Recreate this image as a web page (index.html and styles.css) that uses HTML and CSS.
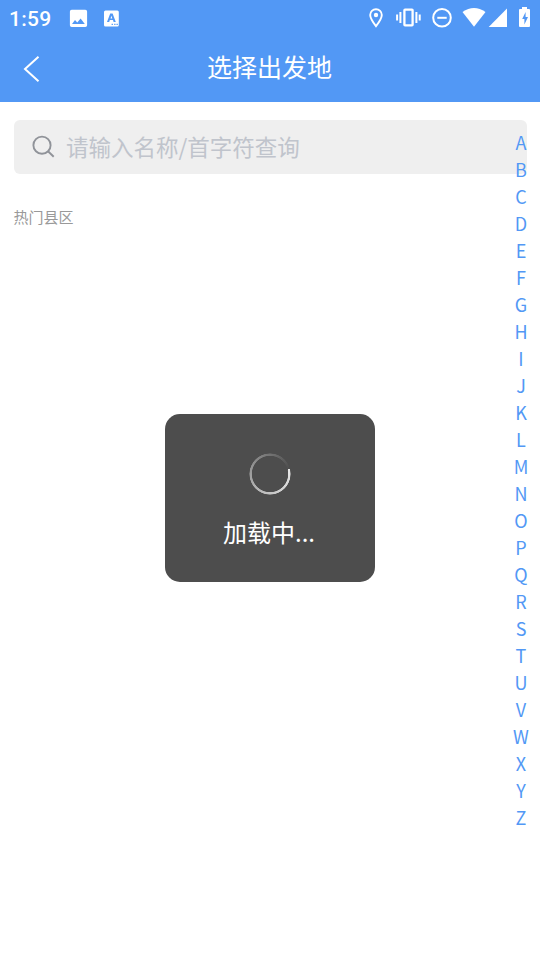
FILE: index.html
```html
<!DOCTYPE html>
<html lang="zh-CN">
<head>
<meta charset="utf-8">
<title>选择出发地</title>
<link rel="stylesheet" href="styles.css">
</head>
<body>
<header class="header">
  <div class="status">
    <span class="time">1:59</span>
    <svg class="notifications" width="60" height="36" viewBox="0 0 60 36">
      <path fill="#fff" fill-rule="evenodd" d="M3.700 9.700h13.600q1.800 0 1.800 1.800v13.700q0 1.800-1.800 1.800H3.700q-1.800 0-1.800-1.800V11.500q0-1.800 1.800-1.800zM4 24h12.800l-4.200-5.400-3.300 4-2.300-2.500z"/>
      <path fill="#fff" fill-rule="evenodd" d="M37.500 10.400h11.800q1.500 0 1.500 1.500V25q0 1.500-1.500 1.500H37.500q-1.500 0-1.500-1.500V11.900q0-1.500 1.500-1.500zM42.200 13.400 39 22h2.200l.6-1.900h3.200l.6 1.900h2.200l-3.200-8.600zM43.400 15.800l.9 2.700h-1.800zM43.600 23.800v1.300h1.300v-1.300zM46.200 23.800v1.300h1.300v-1.300zM48.500 23.800v1.300h1.300v-1.300z"/>
    </svg>
    <svg class="system" width="180" height="36" viewBox="0 0 180 36">
      <path fill="none" stroke="#fff" stroke-width="1.900" d="M16 26.200C12.500 21.700 10.200 18.500 10.200 15a5.800 5.800 0 0 1 11.600 0c0 3.500-2.300 6.700-5.800 11.200z"/>
      <circle cx="16" cy="15" r="2.200" fill="#fff"/>
      <path fill="none" stroke="#fff" stroke-width="2" d="M37.100 14.500v6M40.400 12v11M56.400 12v11M59.700 14.500v6"/>
      <rect x="44.400" y="9.700" width="8.200" height="15.600" rx=".6" fill="none" stroke="#fff" stroke-width="2.300"/>
      <circle cx="82" cy="17.800" r="8.800" fill="none" stroke="#fff" stroke-width="2"/>
      <path stroke="#fff" stroke-width="2" d="M77.300 17.800h9.400"/>
      <path fill="#fff" d="M102.500 12.100q11.500-8.400 23 0L114 26.700z"/>
      <path fill="#fff" d="M147 8.500V27h-18.300z"/>
      <path fill="#fff" fill-rule="evenodd" d="M162 7h5v2h2q1 0 1 1v16q0 1-1 1h-9q-1 0-1-1V10q0-1 1-1h2zM165.600 12l-3.400 6.900h2.200v5.600l3.600-7.500h-2.400z"/>
    </svg>
  </div>
  <div class="titlebar">
    <svg class="back" width="20" height="30" viewBox="0 0 20 30"><path d="M16.500 2.700 3 15l13.500 12.300" fill="none" stroke="#fff" stroke-width="2"/></svg>
    <h1 class="title">选择出发地</h1>
  </div>
</header>
<main class="content">
  <div class="search">
    <svg width="24" height="24" viewBox="0 0 24 24"><g fill="none" stroke="#909399" stroke-width="1.900"><circle cx="10" cy="10.200" r="8.600"/><path d="M16 16.200 21.700 21.700"/></g></svg>
    <span class="placeholder">请输入名称/首字符查询</span>
  </div>
  <h2 class="section">热门县区</h2>
</main>
<nav class="index">
  <span>A</span><span>B</span><span>C</span><span>D</span><span>E</span><span>F</span><span>G</span><span>H</span><span>I</span><span>J</span><span>K</span><span>L</span><span>M</span><span>N</span><span>O</span><span>P</span><span>Q</span><span>R</span><span>S</span><span>T</span><span>U</span><span>V</span><span>W</span><span>X</span><span>Y</span><span>Z</span>
</nav>
<div class="toast">
  <div class="spinner"></div>
  <div class="loading">加载中...</div>
</div>
</body>
</html>
```
FILE: styles.css
```css
* { box-sizing: border-box; }
body {
  margin: 0;
  height: 960px;
  position: relative;
  overflow: hidden;
  background: #fff;
  font-family: "Noto Sans CJK SC", sans-serif;
}
.header { height: 102px; background: #5298f5; color: #fff; }
.status { height: 36px; display: flex; }
.time {
  width: 68px;
  padding-left: 9px;
  font: 500 21px/38px Roboto, sans-serif;
  letter-spacing: .3px;
}
.system { margin-left: auto; }
.titlebar {
  height: 66px;
  display: grid;
  grid-template-columns: 60px 1fr 61px;
}
.back { margin: 18px 0 0 22px; }
.title {
  margin: 0;
  text-align: center;
  font-size: 25px;
  font-weight: 400;
  line-height: 60px;
}
.content { padding: 18px 13px 0 14px; }
.search {
  height: 54px;
  display: flex;
  align-items: center;
  padding-left: 18px;
  background: #efefef;
  border-radius: 6px;
}
.placeholder {
  margin-left: 10px;
  color: #c0c4cc;
  font-size: 22.5px;
  line-height: 52px;
  height: 54px;
}
.section {
  margin: 32px 0 0 -.5px;
  color: #999;
  font-size: 15px;
  font-weight: 400;
  line-height: 22px;
}
.index {
  position: absolute;
  top: 129px;
  right: 4px;
  width: 30px;
  display: flex;
  flex-direction: column;
  text-align: center;
  color: #5298f5;
  font-size: 18px;
  line-height: 27px;
}
.toast {
  position: absolute;
  top: 414px;
  left: 165px;
  width: 210px;
  height: 168px;
  padding: 39px 1px 0 0;
  display: flex;
  flex-direction: column;
  align-items: center;
  border-radius: 15px;
  background: #4d4d4d;
  color: #fff;
}
.spinner {
  width: 42px;
  height: 42px;
  margin-left: 1px;
  border-radius: 50%;
  background: conic-gradient(from 76deg, #e8e8e8, #bdbdbd 35%, #8c8c8c 65%, #4d4d4d 100%);
  -webkit-mask: radial-gradient(circle, transparent 17.800px, #000 18.500px, #000 20.200px, transparent 20.900px);
  mask: radial-gradient(circle, transparent 17.800px, #000 18.500px, #000 20.200px, transparent 20.900px);
}
.loading { margin: 19px 1px 0 0; font-size: 24px; line-height: 36px; }
```
